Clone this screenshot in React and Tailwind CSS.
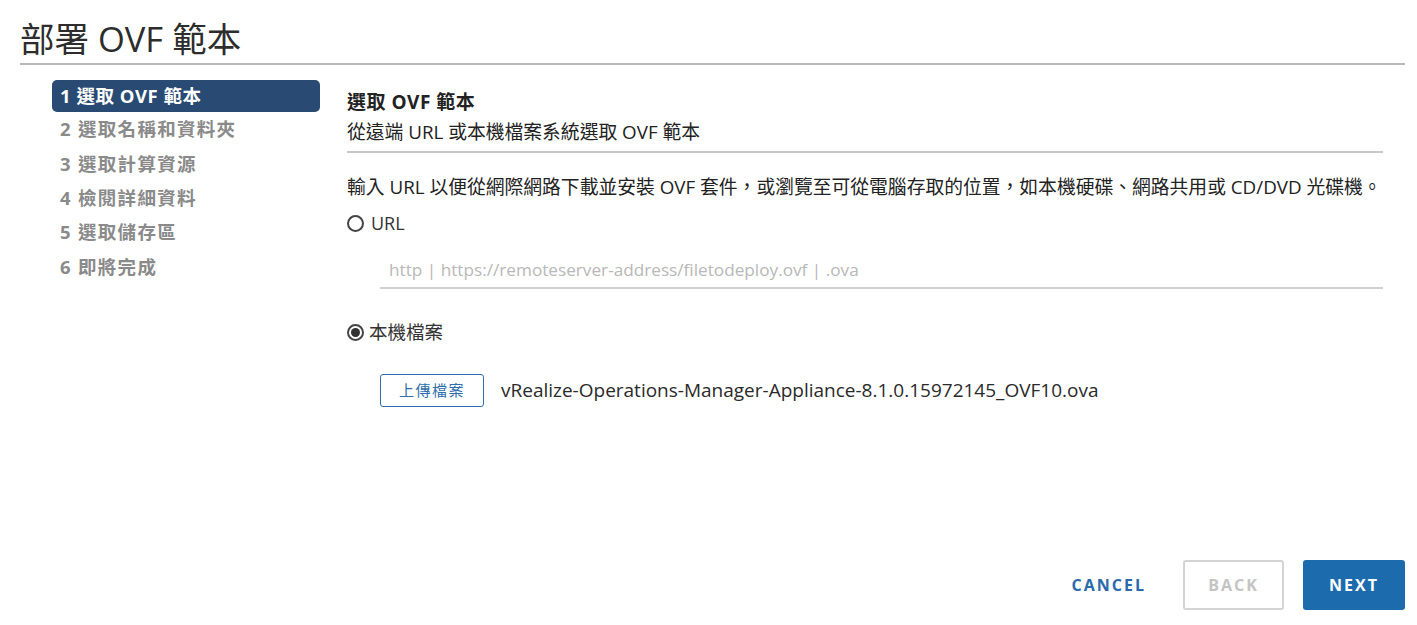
import React from "react";

const steps = [
  "1 選取 OVF 範本",
  "2 選取名稱和資料夾",
  "3 選取計算資源",
  "4 檢閱詳細資料",
  "5 選取儲存區",
  "6 即將完成",
];

const Radio = ({ checked }) => (
  <span className="w-[17px] h-[17px] rounded-full border-2 border-[#444] flex items-center justify-center shrink-0">
    {checked && <span className="w-[9px] h-[9px] rounded-full bg-[#333]" />}
  </span>
);

export default function App() {
  return (
    <div className="h-[625px] w-[1417px] bg-white flex flex-col font-['Open_Sans','Noto_Sans_CJK_TC',sans-serif] text-[#333] overflow-hidden">
      <div className="mx-[20px] mr-[12px] pt-[19px] pb-[4px] border-b-2 border-[#b8b8b8]">
        <h1 className="text-[34.5px] leading-[40px] text-[#2d2d2d]">部署 OVF 範本</h1>
      </div>

      <div className="flex flex-1 pt-[15px]">
        <nav className="ml-[52px] w-[268px] flex flex-col">
          {steps.map((s, i) =>
            i === 0 ? (
              <div
                key={i}
                className="h-[32px] flex items-center pl-[8px] rounded-[5px] bg-[#294b73] text-white font-bold text-[18.5px] tracking-[0.5px]"
              >
                {s}
              </div>
            ) : (
              <div
                key={i}
                className="h-[34px] mt-[0.3px] flex items-center pl-[8px] text-[#8a8a8a] font-bold text-[18.5px] tracking-[1.3px]"
              >
                {s}
              </div>
            )
          )}
        </nav>

        <main className="ml-[27px] w-[1036px] flex flex-col pt-[10px]">
          <h2 className="text-[19px] leading-[24px] font-bold text-[#222] tracking-[0.5px]">選取 OVF 範本</h2>
          <p className="mt-[6px] text-[18.8px] leading-[24px] text-[#222] pb-[7px] border-b-2 border-[#c8c8c8]">
            從遠端 URL 或本機檔案系統選取 OVF 範本
          </p>

          <p className="mt-[22px] text-[18.8px] leading-[24px] text-[#222] whitespace-nowrap">
            輸入 URL 以便從網際網路下載並安裝 OVF 套件，或瀏覽至可從電腦存取的位置，如本機硬碟、網路共用或 CD/DVD 光碟機。
          </p>

          <label className="mt-[12px] h-[24px] flex items-center gap-[7px] text-[18px]">
            <Radio checked={false} />
            <span>URL</span>
          </label>

          <div className="ml-[33px] mt-[19px] h-[35px] border-b-2 border-[#d0d0d0] flex items-center pl-[9px] pb-[2px]">
            <span className="text-[17.2px] text-[#b8b8b8]">
              http | https://remoteserver-address/filetodeploy.ovf | .ova
            </span>
          </div>

          <label className="mt-[31px] h-[24px] flex items-center gap-[5px] text-[18.5px]">
            <Radio checked />
            <span>本機檔案</span>
          </label>

          <div className="ml-[33px] mt-[30px] flex items-center gap-[17px]">
            <button className="w-[104px] h-[33px] border-[1.5px] border-[#2f6ead] rounded-[3px] text-[#2f6ead] text-[15px] tracking-[1.5px]">
              上傳檔案
            </button>
            <span className="text-[19px] text-[#2a2a2a]">
              vRealize-Operations-Manager-Appliance-8.1.0.15972145_OVF10.ova
            </span>
          </div>
        </main>
      </div>

      <div className="flex justify-end items-center pr-[12px] pb-[15px]">
        <button className="h-[50px] px-[18px] mr-[19px] text-[#2a6aab] font-bold text-[16px] tracking-[2px]">
          CANCEL
        </button>
        <button className="w-[101px] h-[50px] border-2 border-[#d4d4d4] rounded-[3px] text-[#c4c4c4] font-bold text-[16px] tracking-[2px]">
          BACK
        </button>
        <button className="ml-[19px] w-[102px] h-[50px] rounded-[3px] bg-[#1c6cad] text-white font-bold text-[16px] tracking-[2px]">
          NEXT
        </button>
      </div>
    </div>
  );
}
